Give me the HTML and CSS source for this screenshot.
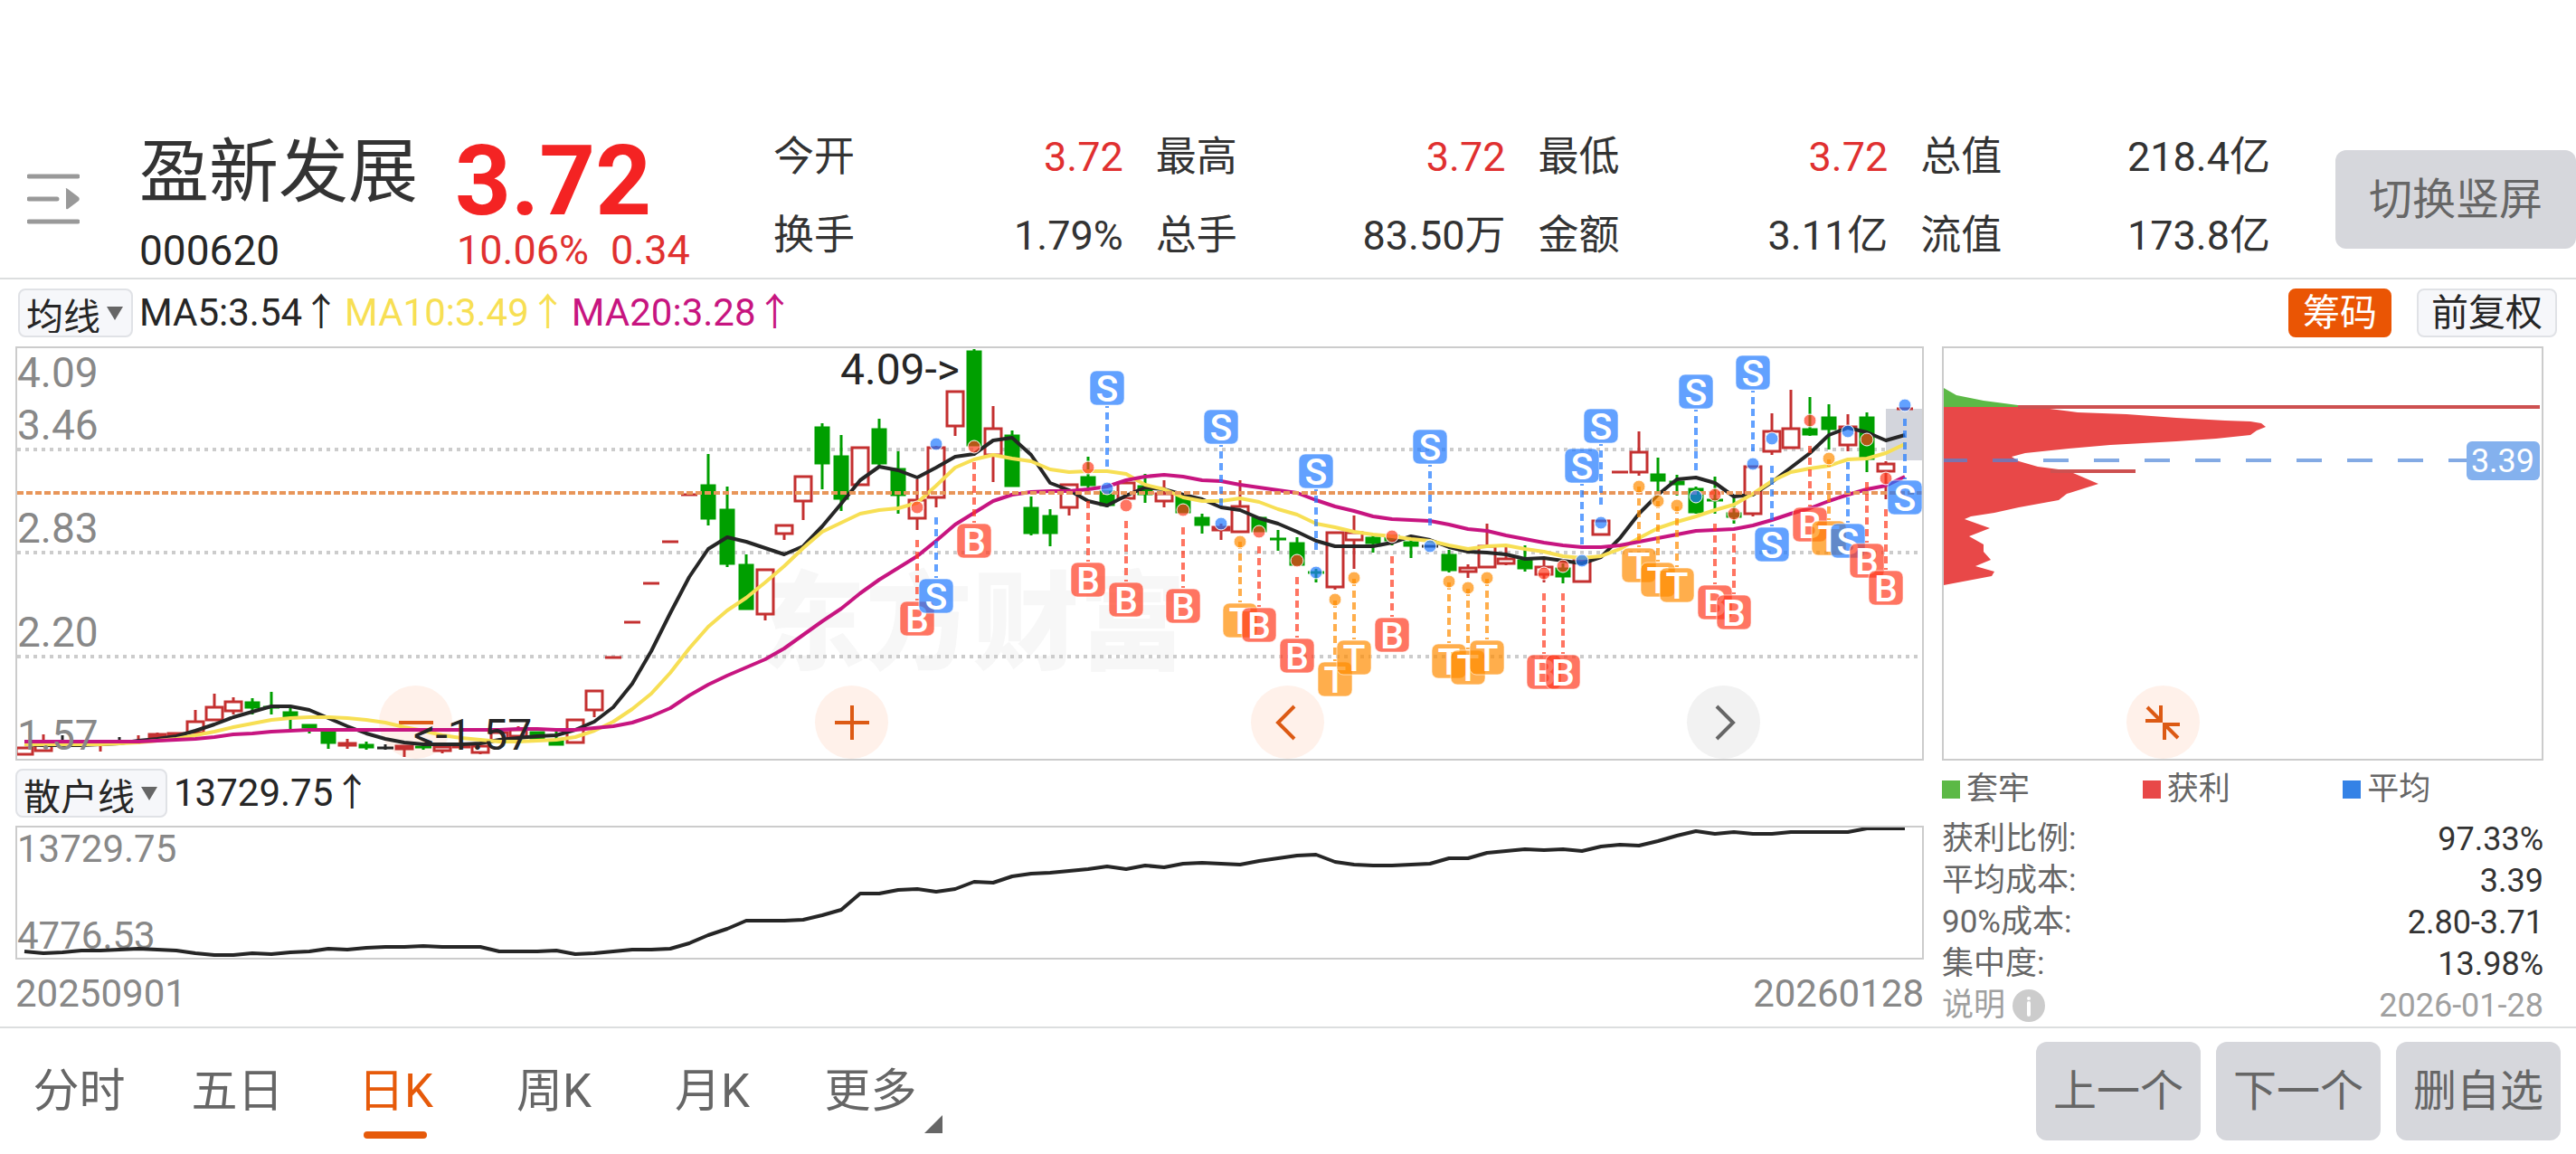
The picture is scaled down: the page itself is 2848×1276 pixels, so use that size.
FILE: index.html
```html
<!DOCTYPE html>
<html lang="zh-CN">
<head>
<meta charset="utf-8">
<meta name="viewport" content="width=device-width, initial-scale=1">
<title>盈新发展 000620</title>
<link rel="stylesheet" href="styles.css">
</head>
<body>
<header class="quote">
  <button class="menu" type="button" aria-label="列表">
    <svg viewBox="0 0 58 56" width="58" height="56" aria-hidden="true">
      <path d="M2 3H56M2 28H33M2 53H56" fill="none" stroke="#999" stroke-width="5" stroke-linecap="round"/>
      <path d="M43 17Q42 15 45 17L57 26Q58.500 28 57 30L45 39Q43 40 43 38Z" fill="#999"/>
    </svg>
  </button>
  <div class="title">
    <h1 class="name">盈新发展</h1>
    <p class="line">000620</p>
  </div>
  <div class="price">
    <strong class="last">3.72</strong>
    <p class="line up change"><span>10.06%</span><span>0.34</span></p>
  </div>
  <dl class="stats">
    <div class="stat"><dt>今开</dt><dd class="up">3.72</dd></div>
    <div class="stat"><dt>最高</dt><dd class="up">3.72</dd></div>
    <div class="stat"><dt>最低</dt><dd class="up">3.72</dd></div>
    <div class="stat"><dt>总值</dt><dd>218.4亿</dd></div>
    <div class="stat"><dt>换手</dt><dd>1.79%</dd></div>
    <div class="stat"><dt>总手</dt><dd>83.50万</dd></div>
    <div class="stat"><dt>金额</dt><dd>3.11亿</dd></div>
    <div class="stat"><dt>流值</dt><dd>173.8亿</dd></div>
  </dl>
  <button class="soft rotate" type="button">切换竖屏</button>
</header>

<div class="toolbar">
  <span class="picker ma-picker"><select aria-label="主图指标"><option>均线</option></select></span>
  <p class="legend-line"><span>MA5:3.54↑</span><span class="ma10">MA10:3.49↑</span><span class="ma20">MA20:3.28↑</span></p>
  <button class="tag tag-on" type="button">筹码</button>
  <button class="tag" type="button">前复权</button>
</div>

<main class="board">
  <section class="charts">
    <div class="plot">
      <div class="tools">
        <button class="round" type="button" aria-label="缩小"><svg viewBox="0 0 40 40"><path d="M1 20H39"/></svg></button>
        <button class="round" type="button" aria-label="放大"><svg viewBox="0 0 40 40"><path d="M1 20H39M20 1V39"/></svg></button>
        <button class="round" type="button" aria-label="向左"><svg viewBox="0 0 40 40"><path d="M27 2L9 20L27 38"/></svg></button>
        <button class="round off" type="button" aria-label="向右"><svg viewBox="0 0 40 40"><path d="M13 2L31 20L13 38"/></svg></button>
      </div>
      <svg class="canvas" viewBox="2 2 2106 454">
        <text class="watermark" x="822" y="348">东方财富</text>
        <path class="grid" d="M2 114H2108M2 228H2108M2 343H2108"/>
        <rect x="2068" y="69" width="40" height="57" fill="#d3d5dc"/>
        <g id="candles"></g>
        <g id="averages"></g>
        <path class="cost" d="M2 162H2108"/>
        <g id="marks"></g>
        <text class="peak" x="912" y="42">4.09-&gt;</text>
        <text class="peak" x="440" y="446">&lt;-1.57</text>
        <g class="axis">
          <text x="2" y="45">4.09</text>
          <text x="2" y="103">3.46</text>
          <text x="2" y="217">2.83</text>
          <text x="2" y="332">2.20</text>
          <text x="2" y="446">1.57</text>
        </g>
      </svg>
    </div>
    <div class="subbar">
      <span class="picker sub-picker"><select aria-label="副图指标"><option>散户线</option></select></span>
      <p class="legend-line">13729.75↑</p>
    </div>
    <div class="plot">
      <svg class="canvas" viewBox="2 2 2106 144">
        <g class="axis small">
          <text x="2" y="40">13729.75</text>
          <text x="2" y="136">4776.53</text>
        </g>
        <g id="retail"></g>
      </svg>
    </div>
    <p class="dates"><span>20250901</span><span>20260128</span></p>
  </section>

  <aside class="chips">
    <div class="plot">
      <div class="tools chip-tools">
        <button class="round" type="button" aria-label="收起"><svg viewBox="0 0 40 40"><path d="M3 3L17 17M18 1V18H1M37 37L23 23M22 39V22H39"/></svg></button>
      </div>
      <svg class="canvas" viewBox="2 2 661 454">
        <path fill="#e84848" d="M2 67L84 67L119 69L150 73L204 75L259 79L313 82L341 83L353 85L358 89L348 93L341 98L303 102L259 105L186 109L140 113L92 118L77 122L85 127L106 133L129 136L145 140L173 152L138 163L129 170L85 178L58 184L32 188L25 191L53 201L30 210L46 219L46 227L54 236L37 243L58 249L55 254L2 264Z"/>
        <path fill="#5cb946" d="M2 46L16 54L46 60L84 65L84 67L2 67Z"/>
        <path d="M84 67H661M120 138H214" stroke="#cd5050" stroke-width="4"/>
        <path d="M2 126H580" stroke="#4f86d9" stroke-opacity=".7" stroke-width="4" stroke-dasharray="28 28" stroke-dashoffset="2"/>
        <rect x="580" y="105" width="81" height="43" rx="6" fill="#84b1ee"/>
        <text class="badge" x="620" y="139">3.39</text>
      </svg>
    </div>
    <ul class="keys">
      <li class="key locked">套牢</li>
      <li class="key gain">获利</li>
      <li class="key mean">平均</li>
    </ul>
    <table class="facts">
      <tbody>
        <tr><th scope="row">获利比例:</th><td>97.33%</td></tr>
        <tr><th scope="row">平均成本:</th><td>3.39</td></tr>
        <tr><th scope="row">90%成本:</th><td>2.80-3.71</td></tr>
        <tr><th scope="row">集中度:</th><td>13.98%</td></tr>
        <tr class="note"><th scope="row"><span class="explain">说明<svg viewBox="0 0 36 36" width="36" height="36" aria-hidden="true"><circle cx="18" cy="18" r="18" fill="#ccc"/><circle cx="18" cy="10" r="2" fill="#fff"/><path d="M18 15V28" stroke="#fff" stroke-width="4" stroke-linecap="round"/></svg></span></th><td>2026-01-28</td></tr>
      </tbody>
    </table>
  </aside>
</main>

<footer class="bottom">
  <nav class="tabs" aria-label="周期">
    <button class="tab" type="button">分时</button>
    <button class="tab" type="button">五日</button>
    <button class="tab current" type="button" aria-current="true">日K</button>
    <button class="tab" type="button">周K</button>
    <button class="tab" type="button">月K</button>
    <button class="tab more" type="button">更多</button>
  </nav>
  <div class="actions">
    <button class="soft" type="button">上一个</button>
    <button class="soft" type="button">下一个</button>
    <button class="soft" type="button">删自选</button>
  </div>
</footer>
<script src="chart.js"></script>
</body>
</html>
```
FILE: styles.css
```css
* { box-sizing: border-box; }

body {
  margin: 0;
  background: #fff;
  color: #333;
  font-family: Roboto, "Noto Sans CJK SC", sans-serif;
  font-size: 45px;
  line-height: 60px;
}

h1, p, dl, dd, ul { margin: 0; padding: 0; font-weight: 400; }
ul { list-style: none; }
button, select { font: inherit; color: inherit; border: 0; padding: 0; margin: 0; cursor: pointer; }
.up { color: #e03030; }

/* quote header */
.quote {
  display: flex;
  align-items: flex-start;
  padding: 130px 0 3px 30px;
  border-bottom: 2px solid #dcdedf;
}
.menu { flex: none; width: 58px; height: 56px; margin: 62px 66px 0 0; background: none; }
.menu svg { display: block; }
.title { width: 349px; margin-top: 12px; }
.name { font-size: 77px; line-height: 98px; margin-bottom: 10px; }
.line { color: #262626; font-size: 46px; line-height: 54px; }
.price { width: 352px; margin-top: 12px; }
.last { display: block; color: #f42323; font-size: 108px; line-height: 108px; font-weight: 700; padding-top: 4px; margin-bottom: -4px; }
.line.change { display: flex; gap: 24px; padding-left: 2px; color: #e03030; font-size: 45px; }
.stats { flex: 1; display: grid; grid-template-columns: repeat(4, 1fr); column-gap: 36px; }
.stat { display: flex; justify-content: space-between; line-height: 87px; }
.soft {
  min-width: 182px;
  height: 109px;
  border-radius: 12px;
  background: #d6d7dc;
  color: #666;
  font-size: 48px;
}
.rotate { width: 266px; margin: 36px 0 0 72px; }

/* indicator bar */
.toolbar, .subbar { display: flex; align-items: center; color: #262626; font-size: 42px; }
.toolbar { height: 74px; padding: 0 21px 0 20px; }
.subbar { height: 72px; }
.picker { position: relative; margin-right: 7px; }
.picker::after {
  content: "";
  position: absolute;
  right: 11px;
  top: 20px;
  border: 9px solid transparent;
  border-top: 15px solid #666;
  border-bottom: 0;
  pointer-events: none;
}
.picker select {
  display: block;
  appearance: none;
  width: 100%;
  height: 54px;
  padding: 0 0 3px 7px;
  border: 2px solid #e0e2e6;
  border-radius: 8px;
  background: #f6f7fa;
  font-size: 41px;
}
.ma-picker { width: 127px; }
.sub-picker { width: 168px; }
.legend-line { flex: 1; display: flex; gap: 5px; }
.ma10 { color: #f7df54; }
.ma20 { color: #c71580; }
.tag {
  height: 54px;
  padding: 0 14px;
  margin-left: 28px;
  border: 2px solid #e0e2e6;
  border-radius: 8px;
  background: #f6f7fa;
  font-size: 41px;
  line-height: 50px;
}
.tag-on { border-color: #ea5504; background: #ea5504; color: #fff; }

/* charts */
.board {
  display: grid;
  grid-template-columns: 2110fr 665fr;
  column-gap: 20px;
  padding: 0 36px 0 17px;
}
.plot { position: relative; border: 2px solid #ccc; }
.canvas { position: relative; display: block; width: 100%; height: auto; pointer-events: none; }
.tools {
  position: absolute;
  inset: auto 8.5% 0 19%;
  display: flex;
  justify-content: space-between;
}
.chip-tools { left: 30.5%; }
.round {
  display: grid;
  place-items: center;
  width: 81px;
  height: 81px;
  border-radius: 50%;
  background: #fff1ea;
  color: #dc5a14;
}
.round svg { width: 40px; height: 40px; fill: none; stroke: currentColor; stroke-width: 4; }
.round.off { background: #f2f2f2; color: #666; }

.watermark { fill: #f7f7f7; font-size: 118px; font-weight: 900; }
.grid { fill: none; stroke: #ccc; stroke-width: 4; stroke-dasharray: 4 5; }
.cost { fill: none; stroke: #e8965a; stroke-width: 4; stroke-dasharray: 7 3; }
.peak { fill: #262626; font-size: 48px; }
.axis { fill: #888; font-size: 46px; }
.axis.small { font-size: 42px; }
.badge { fill: #fff; font-size: 36px; text-anchor: middle; }

.ma { fill: none; stroke-width: 4; stroke-linejoin: round; }
.ma5, .retail { stroke: #262626; }
.ma10-line { stroke: #f7df54; }
.ma20-line { stroke: #c71580; }
.retail { fill: none; stroke-width: 4; stroke-linejoin: round; }
.r { stroke: #c43030; fill: #fff; stroke-width: 3; }
.g { stroke: #009f00; fill: #009f00; stroke-width: 3; }
.k { stroke: #262626; fill: #262626; stroke-width: 3; }
.mark-b { fill: #ff3b20; stroke: #ff3b20; }
.mark-s { fill: #2079ff; stroke: #2079ff; }
.mark-t { fill: #ff8b00; stroke: #ff8b00; }
.stem { stroke-width: 4; stroke-dasharray: 8 5; stroke-opacity: .7; }
.dot { fill-opacity: .7; stroke: #fff; stroke-width: 1; }
.box { fill-opacity: .7; stroke: #fff; stroke-width: 1; stroke-opacity: .6; }
.letter { fill: #fff; stroke: none; font: 500 41px Roboto, sans-serif; text-anchor: middle; }

.dates { display: flex; justify-content: space-between; color: #888; font-size: 42px; line-height: 75px; height: 72px; }

/* cost distribution */
.keys { display: grid; grid-template-columns: repeat(3, 1fr); color: #666; font-size: 35px; line-height: 64px; }
.key { display: flex; align-items: center; gap: 7px; }
.key::before { content: ""; width: 20px; height: 20px; background: currentColor; }
.locked::before { background: #5cb946; }
.gain::before { background: #e84848; }
.mean::before { background: #3482e6; }
.facts { width: 100%; border-collapse: collapse; font-size: 35px; line-height: 46px; }
.facts th { padding: 0; text-align: left; font-weight: 400; color: #666; }
.facts td { padding: 0; text-align: right; font-size: 36px; }
.facts .note th, .facts .note td { color: #a0a0a0; }
.explain { display: flex; align-items: center; gap: 8px; }

/* period tabs and actions */
.bottom {
  display: flex;
  justify-content: space-between;
  align-items: flex-start;
  padding: 15px 17px 14px 0;
  border-top: 2px solid #dcdedf;
}
.tabs { display: flex; color: #666; font-size: 51px; }
.tab { position: relative; width: 175px; height: 109px; background: none; }
.current { color: #e65a0a; }
.current::after {
  content: "";
  position: absolute;
  left: 52px;
  bottom: 2px;
  width: 70px;
  height: 8px;
  border-radius: 4px;
  background: #e65a0a;
}
.more::after {
  content: "";
  position: absolute;
  right: 8px;
  bottom: 8px;
  border-left: 20px solid transparent;
  border-bottom: 20px solid #666;
}
.actions { display: flex; gap: 17px; }
```
FILE: chart.js
```js
// One entry per trading day: kind, high, body top, body bottom, low (plot units, downwards).
const days = `
r 443 443 452 452|r 429 440 448 448|k 430 440 442 442|k 440 440 442 442|r 439 439 441 448|k 432 437 438 440|r 430 437 440 440|r 427 428 433 433|r 427 427 432 432|r 402 414 428 428
r 384 398 414 414|r 388 392 404 407|g 389 393 400 407|g 382 399 401 407|g 399 404 410 424|g 418 418 422 428|g 426 426 439 445|r 434 438 442 445|g 437 440 444 446|k 440 444 446 446
r 441 441 446 454|g 440 443 446 446|r 442 442 448 450|r 439 439 444 444|r 441 441 450 451|r 426 426 437 437|r 420 423 432 432|g 426 426 434 434|g 426 435 441 441|r 412 412 439 439
r 380 380 403 410|r 344 344 344 344|r 305 305 305 305|r 262 262 262 262|r 216 216 216 216|r 164 164 164 164|g 119 153 191 198|g 155 180 241 244|g 230 241 291 291|r 246 246 297 303
r 197 197 208 214|r 143 143 172 192|g 85 89 130 158|g 98 121 169 182|r 111 111 154 154|g 80 91 130 132|g 116 135 165 185|r 147 169 191 203|r 110 111 168 178|r 49 49 89 99
g 3 5 110 110|r 66 90 121 150|g 93 98 155 155|g 166 178 207 209|g 180 187 207 221|r 152 152 179 187|g 122 144 154 157|g 160 160 176 178|r 147 150 169 169|g 141 154 164 173
r 148 162 172 178|g 165 165 184 184|g 185 189 198 207|r 196 199 204 214|r 148 176 206 206|g 189 189 205 205|g 203 213 215 226|g 211 217 242 242|g 246 250 252 261|r 205 205 267 269
r 187 205 215 246|g 209 211 218 228|g 209 209 215 220|g 214 216 221 234|k 220 221 222 222|g 225 230 248 250|r 241 244 250 256|r 196 220 245 245|r 222 234 241 242|g 220 236 246 249
r 236 243 253 261|g 240 245 255 262|r 236 236 261 261|r 192 192 209 209|r 139 139 139 139|r 94 116 140 143|g 123 141 149 162|g 142 149 153 165|g 155 157 184 185|g 144 170 173 185
g 166 184 189 196|r 132 132 186 188|r 74 93 117 120|r 48 90 113 113|g 56 91 98 99|g 64 78 92 114|r 75 88 110 116|g 73 78 125 139|r 127 129 139 169|r 69 69 69 69`
  .trim().split(/[|\n]/).map(s => s.split(' '));

const ma5 = [440,441,441,441,440,439,436,434,431,425,418,410,404,398,398,402,411,420,428,434,438,440,440,440,439,435,433,431,430,424,415,399,373,337,295,255,224,211,216,223,230,221,199,174,148,133,137,145,134,122,119,104,101,120,151,159,171,176,165,156,158,164,169,178,181,190,196,205,215,221,221,221,217,210,214,222,227,228,230,235,234,237,240,233,212,185,164,147,145,151,166,164,150,134,118,98,90,95,104,98];
const ma10 = [440,440,440,440,440,439,438,436,434,430,426,421,417,413,411,410,410,411,413,416,421,425,430,433,435,437,437,436,435,432,425,415,401,384,361,334,310,292,278,261,243,223,205,195,185,181,179,173,154,134,125,120,124,127,136,139,138,138,141,153,158,167,171,171,168,172,180,186,196,200,205,208,210,213,215,220,224,221,220,224,227,232,234,232,224,212,201,194,188,181,175,163,149,139,135,132,125,124,118,108];
const ma20 = [437,437,437,437,437,437,437,436,435,434,432,429,428,426,425,424,424,424,424,424,424,424,424,424,424,424,423,423,424,424,422,420,416,409,400,386,374,364,355,346,334,319,304,290,273,258,245,232,215,197,184,171,164,161,160,160,158,155,148,144,142,144,148,149,153,156,159,162,170,177,182,188,191,192,193,197,202,204,209,213,217,220,222,222,220,216,212,208,204,203,202,198,192,185,179,171,164,158,154,144];
const retail = [139,141,140,138,138,137,136,137,138,141,143,143,141,142,140,139,136,137,135,134,134,133,134,134,134,139,139,139,138,142,141,139,137,137,136,130,121,114,105,105,105,104,99,93,75,75,71,70,73,70,62,63,56,53,52,50,48,45,48,44,46,42,41,42,43,39,36,33,32,40,43,44,44,43,42,36,36,30,28,26,27,26,28,23,21,22,17,11,6,9,7,9,9,7,7,7,7,3,3,3];

// Trade marks: day, letter, dot height, box centre; the box may sit above or below its dot.
const marks = [
  [47,'B',178,301],[48,'S',108,276],[50,'B',111,215],[56,'B',134,258],[57,'S',157,46],[58,'B',176,280],
  [61,'B',181,287],[63,'S',196,89],[64,'T',216,303],[65,'B',205,308],[67,'B',237,342],[68,'S',250,138],
  [69,'T',280,368],[70,'T',256,344],[72,'B',210,319],[74,'S',221,111],[75,'T',260,348],[76,'T',267,355],
  [77,'T',256,344],[80,'B',251,360],[81,'B',243,360],[82,'S',237,132],[83,'S',195,88],[85,'T',155,242],
  [86,'T',171,258],[87,'T',176,264],[88,'S',166,50],[89,'B',164,283],[90,'B',185,294],[91,'S',130,29],
  [92,'S',102,219],[94,'B',82,197],[95,'T',124,212],[96,'S',94,215],[97,'B',103,237],[98,'B',146,267],[99,'S',65,167]
];

const x = i => 10 + 21 * i;
const fill = (id, html) => { document.getElementById(id).innerHTML = html; };
const line = (values, cls) =>
  `<polyline class="${cls}" points="${values.map((v, i) => x(i) + ',' + v).join(' ')}"/>`;

fill('candles', days.map(([kind, high, top, bottom, low], i) => {
  const c = x(i), h = bottom - top;
  if (h < 4) return `<path class="${kind}" d="M${c - 9} ${top}H${c + 9}M${c} ${high}V${low}"/>`;
  const wick = `<path class="${kind}" d="M${c} ${high}V${top}M${c} ${bottom}V${low}"/>`;
  const inset = kind === 'r' ? 9 : 7;
  return wick + `<rect class="${kind}" x="${c - inset}" y="${+top + 1}" width="${inset * 2}" height="${h - 2}"/>`;
}).join(''));

fill('averages', line(ma5, 'ma ma5') + line(ma10, 'ma ma10-line') + line(ma20, 'ma ma20-line'));
fill('retail', line(retail, 'retail'));

fill('marks', marks.map(([i, letter, dot, box]) => {
  const c = x(i), dir = box > dot ? -1 : 1;
  return `<g class="mark-${letter.toLowerCase()}">
    <path class="stem" d="M${c} ${box + dir * 87}V${box + dir * 20}"/>
    <circle class="dot" cx="${c}" cy="${dot}" r="7"/>
    <rect class="box" x="${c - 19}" y="${box - 19}" width="38" height="38" rx="7"/>
    <text class="letter" x="${c}" y="${box + 15}">${letter}</text></g>`;
}).join(''));
```
